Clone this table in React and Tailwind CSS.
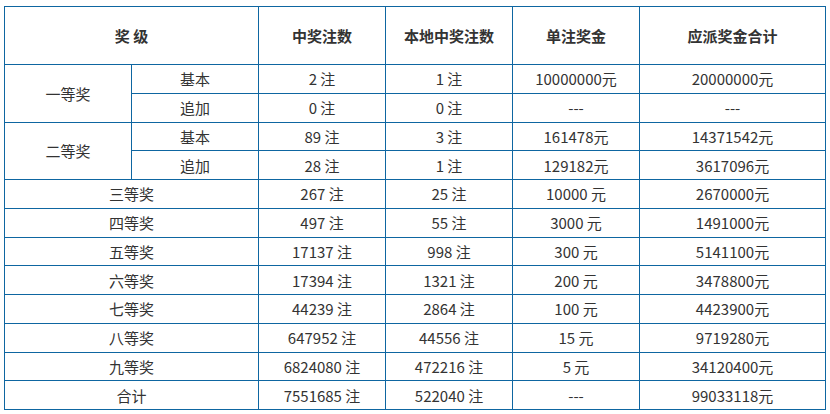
const rows = [
  ["三等奖", "267 注", "25 注", "10000 元", "2670000元"],
  ["四等奖", "497 注", "55 注", "3000 元", "1491000元"],
  ["五等奖", "17137 注", "998 注", "300 元", "5141100元"],
  ["六等奖", "17394 注", "1321 注", "200 元", "3478800元"],
  ["七等奖", "44239 注", "2864 注", "100 元", "4423900元"],
  ["八等奖", "647952 注", "44556 注", "15 元", "9719280元"],
  ["九等奖", "6824080 注", "472216 注", "5 元", "34120400元"],
  ["合计", "7551685 注", "522040 注", "---", "99033118元"],
];

const groups = [
  {
    name: "一等奖",
    sub: [
      ["基本", "2 注", "1 注", "10000000元", "20000000元"],
      ["追加", "0 注", "0 注", "---", "---"],
    ],
  },
  {
    name: "二等奖",
    sub: [
      ["基本", "89 注", "3 注", "161478元", "14371542元"],
      ["追加", "28 注", "1 注", "129182元", "3617096元"],
    ],
  },
];

const td = "border border-[#0e66a1] text-center p-0 h-[28.75px]";

export default function App() {
  return (
    <div
      className="bg-white w-[830px] h-[414px] pt-[6px] pl-[4px] text-[#333] text-[15px] leading-none"
      style={{ fontFamily: '"Noto Sans CJK SC", "Noto Sans", sans-serif' }}
    >
      <table className="table-fixed border-collapse w-[822px]">
        <colgroup>
          <col className="w-[127px]" />
          <col className="w-[127px]" />
          <col className="w-[127px]" />
          <col className="w-[127px]" />
          <col className="w-[127px]" />
          <col className="w-[127px]" />
          <col />
        </colgroup>
        <thead>
          <tr>
            <th colSpan={2} className="border border-[#0e66a1] h-[58px] font-bold">奖 级</th>
            <th className="border border-[#0e66a1] font-bold">中奖注数</th>
            <th className="border border-[#0e66a1] font-bold">本地中奖注数</th>
            <th className="border border-[#0e66a1] font-bold">单注奖金</th>
            <th colSpan={2} className="border border-[#0e66a1] font-bold">应派奖金合计</th>
          </tr>
        </thead>
        <tbody>
          {groups.map((g) =>
            g.sub.map((s, i) => (
              <tr key={g.name + i}>
                {i === 0 && (
                  <td rowSpan={2} className={td}>{g.name}</td>
                )}
                <td className={td}>{s[0]}</td>
                <td className={td}>{s[1]}</td>
                <td className={td}>{s[2]}</td>
                <td className={td}>{s[3]}</td>
                <td colSpan={2} className={td}>{s[4]}</td>
              </tr>
            ))
          )}
          {rows.map((r) => (
            <tr key={r[0]}>
              <td colSpan={2} className={td}>{r[0]}</td>
              <td className={td}>{r[1]}</td>
              <td className={td}>{r[2]}</td>
              <td className={td}>{r[3]}</td>
              <td colSpan={2} className={td}>{r[4]}</td>
            </tr>
          ))}
        </tbody>
      </table>
    </div>
  );
}
